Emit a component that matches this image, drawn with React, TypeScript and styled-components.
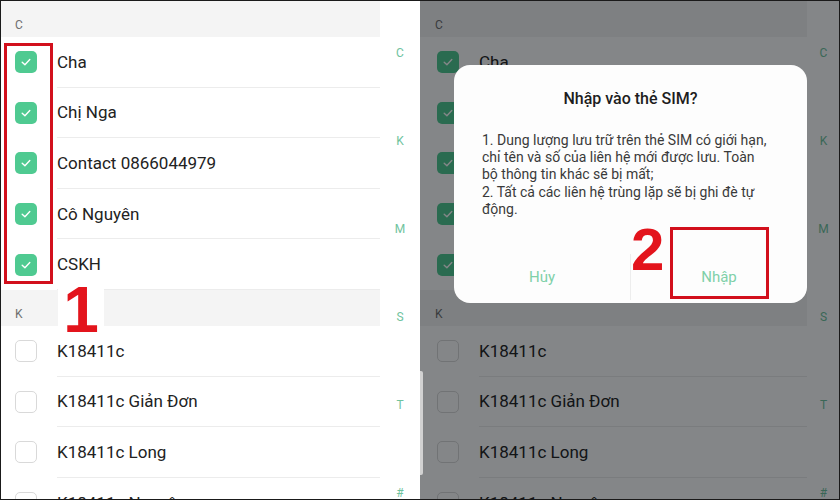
import React from "react";
import styled, { createGlobalStyle } from "styled-components";

const GlobalStyle = createGlobalStyle`
  html, body {
    margin: 0;
    padding: 0;
    background: #fff;
  }
  body {
    font-family: Roboto, "Noto Sans", "Liberation Sans", sans-serif;
  }
`;

type Section = { letter: string; names: string[]; checked: boolean };

const sections: Section[] = [
  { letter: "C", names: ["Cha", "Chị Nga", "Contact 0866044979", "Cô Nguyên", "CSKH"], checked: true },
  { letter: "K", names: ["K18411c", "K18411c Giản Đơn", "K18411c Long", "K18411c Nguyên"], checked: false },
];

const indexLetters = ["C", "K", "M", "S", "T", "#"];

const bodyLines = [
  "1. Dung lượng lưu trữ trên thẻ SIM có giới hạn,",
  "chỉ tên và số của liên hệ mới được lưu. Toàn",
  "bộ thông tin khác sẽ bị mất;",
  "2. Tất cả các liên hệ trùng lặp sẽ bị ghi đè tự",
  "động.",
];

export default function App() {
  return (
    <>
      <GlobalStyle />
      <Frame>
        <Phone>
          <ContactList side="left" />
          <OneMarker>1</OneMarker>
          <SelectBox />
        </Phone>
        <Phone>
          <ContactList side="right" />
          <Dim />
          <ScrollThumb />
          <Dialog>
            <Title>Nhập vào thẻ SIM?</Title>
            <Body>
              {bodyLines.map((l) => (
                <Line key={l}>{l}</Line>
              ))}
            </Body>
            <Actions>
              <Action>Hủy</Action>
              <Action>Nhập</Action>
            </Actions>
            <TwoMarker>2</TwoMarker>
            <ConfirmBox />
          </Dialog>
        </Phone>
      </Frame>
    </>
  );
}

function ContactList({ side }: { side: "left" | "right" }) {
  return (
    <Screen>
      <List side={side}>
        {sections.map((s) => (
          <React.Fragment key={s.letter}>
            <SectionHeader side={side}>{s.letter}</SectionHeader>
            {s.names.map((n) => (
              <Row key={n} side={side}>
                <CheckBox $checked={s.checked}>
                  {s.checked && (
                    <svg width="12" height="12" viewBox="0 0 12 12">
                      <path d="M2.2 6.3 L4.9 8.8 L9.8 3.6" fill="none" stroke="#fff" strokeWidth="1.4" strokeLinecap="round" strokeLinejoin="round" />
                    </svg>
                  )}
                </CheckBox>
                <Name>{n}</Name>
              </Row>
            ))}
          </React.Fragment>
        ))}
      </List>
      <IndexBar>
        {indexLetters.map((l) => (
          <IndexLetter key={l}>{l}</IndexLetter>
        ))}
      </IndexBar>
    </Screen>
  );
}

const Frame = styled.div`
  width: 840px;
  height: 500px;
  box-sizing: border-box;
  border: 1px solid #1a1a1a;
  display: flex;
  overflow: hidden;
`;

const Phone = styled.div`
  position: relative;
  width: 419px;
  flex: 0 0 auto;
  height: 100%;
  overflow: hidden;
  & + & {
    width: 420px;
  }
`;

const Screen = styled.div`
  display: flex;
  height: 100%;
  background: #fff;
`;

const List = styled.div<{ side: "left" | "right" }>`
  width: ${(p) => (p.side === "left" ? "379px" : "387px")};
  flex: 0 0 auto;
  display: flex;
  flex-direction: column;
`;

const SectionHeader = styled.div<{ side: "left" | "right" }>`
  height: 36px;
  flex: 0 0 auto;
  box-sizing: border-box;
  padding: 17px 0 0 ${(p) => (p.side === "left" ? "14px" : "15px")};
  background: #f4f4f4;
  color: #6f6f6f;
  font-size: 12px;
  line-height: 14px;
`;

const Row = styled.div<{ side: "left" | "right" }>`
  height: 50.6px;
  flex: 0 0 auto;
  display: flex;
  align-items: center;
  padding-left: ${(p) => (p.side === "left" ? "14px" : "17px")};
  &:not(:last-child) > span {
    border-bottom: 1px solid #ececec;
  }
`;

const CheckBox = styled.div<{ $checked: boolean }>`
  width: 22px;
  height: 22px;
  box-sizing: border-box;
  border-radius: 5px;
  flex: 0 0 auto;
  display: flex;
  align-items: center;
  justify-content: center;
  background: ${(p) => (p.$checked ? "#4fca91" : "#fff")};
  border: ${(p) => (p.$checked ? "none" : "1.5px solid #d9d9d9")};
`;

const Name = styled.span`
  align-self: stretch;
  flex: 1;
  display: flex;
  align-items: center;
  margin-left: 20px;
  font-size: 17px;
  color: #222;
  white-space: nowrap;
`;

const IndexBar = styled.div`
  flex: 1;
  display: flex;
  flex-direction: column;
  align-items: center;
  padding-top: 45px;
  gap: 74px;
`;

const IndexLetter = styled.div`
  height: 14px;
  line-height: 14px;
  font-size: 12px;
  color: #6fc39e;
`;

const Dim = styled.div`
  position: absolute;
  inset: 0;
  background: rgba(4, 8, 12, 0.49);
`;

const ScrollThumb = styled.div`
  position: absolute;
  left: 0;
  top: 370px;
  width: 3px;
  height: 104px;
  background: #d2d2d2;
  border-radius: 0 2px 2px 0;
`;

const Dialog = styled.div`
  position: absolute;
  left: 34px;
  top: 64px;
  width: 353px;
  height: 238px;
  background: #fdfdfd;
  border-radius: 16px;
  display: flex;
  flex-direction: column;
`;

const Title = styled.div`
  padding-top: 24px;
  text-align: center;
  font-size: 16px;
  font-weight: 500;
  line-height: 20px;
  color: #1e1e1e;
`;

const Body = styled.div`
  padding: 23px 20px 0 28px;
  font-size: 14px;
  line-height: 17.2px;
  color: #3a3a3a;
  flex: 1;
`;

const Line = styled.div`
  white-space: nowrap;
`;

const Actions = styled.div`
  height: 52px;
  display: flex;
  align-items: center;
  & > div + div {
    border-left: 1px solid #ededed;
  }
`;

const Action = styled.div`
  flex: 1;
  height: 46px;
  display: flex;
  align-items: center;
  justify-content: center;
  font-size: 15px;
  color: #7fd0a8;
`;

const OneMarker = styled.div`
  position: absolute;
  left: 57px;
  top: 286px;
  width: 46px;
  height: 48px;
  background: #fff;
  color: #e3141c;
  font-family: "Liberation Sans", Arial, sans-serif;
  font-weight: 700;
  font-size: 64px;
  line-height: 46px;
  text-align: center;
`;

const SelectBox = styled.div`
  position: absolute;
  left: 3px;
  top: 42px;
  width: 49px;
  height: 241px;
  box-sizing: border-box;
  border: 3px solid #d2101c;
`;

const TwoMarker = styled.div`
  position: absolute;
  left: 177px;
  top: 155px;
  color: #e3141c;
  font-family: "Liberation Sans", Arial, sans-serif;
  font-weight: 700;
  font-size: 60px;
  line-height: 60px;
`;

const ConfirmBox = styled.div`
  position: absolute;
  left: 216px;
  top: 162px;
  width: 99px;
  height: 72px;
  box-sizing: border-box;
  border: 3px solid #d2101c;
`;
